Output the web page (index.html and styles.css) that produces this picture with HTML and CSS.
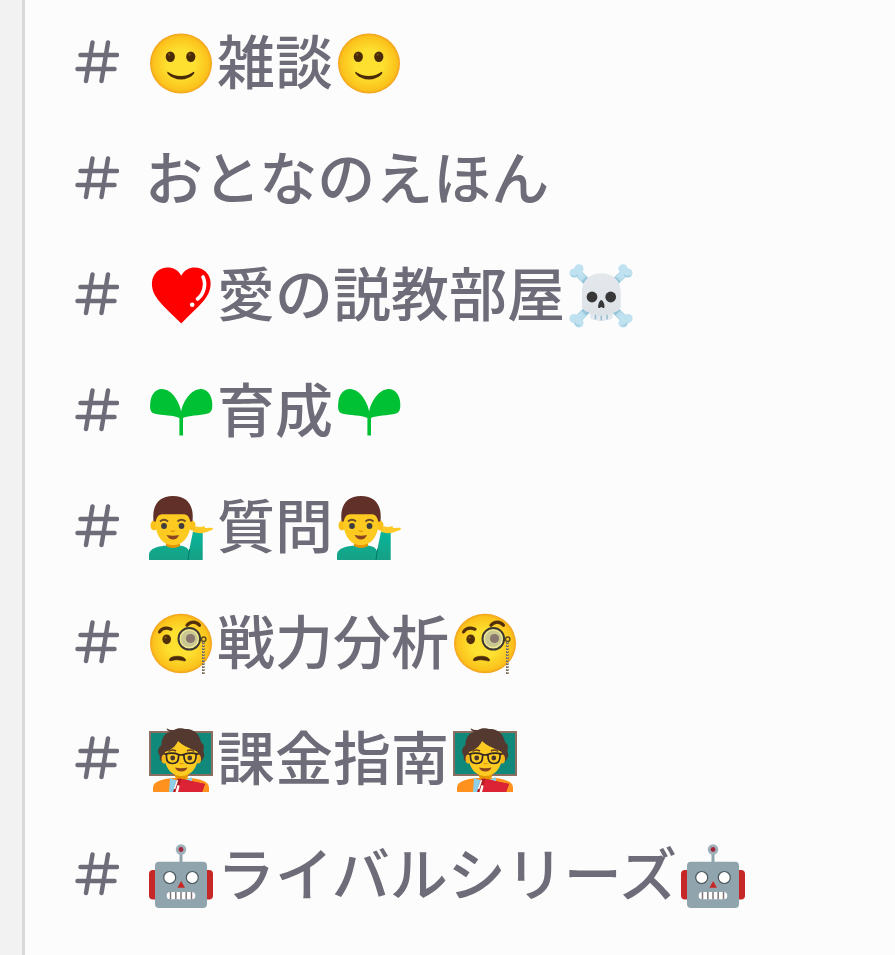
FILE: index.html
```html
<!DOCTYPE html>
<html lang="ja">
<head>
<meta charset="utf-8">
<meta name="viewport" content="width=device-width, initial-scale=1">
<title>チャンネル</title>
<link rel="stylesheet" href="styles.css">
</head>
<body>
<svg class="sprite" aria-hidden="true">
  <defs>
    <radialGradient id="skin"><stop offset=".45" stop-color="#fde030"/><stop offset=".9" stop-color="#fbc21c"/><stop offset="1" stop-color="#f2a11e"/></radialGradient>
    <linearGradient id="shirt" x1="0" y1="0" x2="0" y2="1"><stop offset="0" stop-color="#08b69a"/><stop offset="1" stop-color="#16a085"/></linearGradient>
    <linearGradient id="bone" x1="0" y1="0" x2="0" y2="1"><stop offset="0" stop-color="#e4e8ec"/><stop offset="1" stop-color="#dde2e7"/></linearGradient>
    <symbol id="hash" viewBox="0 0 44 44">
      <path d="M5.5 15H42M2.5 29H39.500M17.500 2.500L11 41M33 2.500L26.500 41" fill="none" stroke="#6d6c78" stroke-width="4.500" stroke-linecap="round"/>
    </symbol>
    <symbol id="smile" viewBox="0 0 64 64">
      <ellipse cx="32" cy="31.500" rx="31" ry="30" fill="url(#skin)"/>
      <ellipse cx="21.300" cy="24.800" rx="4.600" ry="5.200" fill="#4a2b08"/>
      <ellipse cx="41.800" cy="24.800" rx="4.600" ry="5.200" fill="#4a2b08"/>
      <circle cx="20.200" cy="22.600" r="1.100" fill="#7c5410"/><circle cx="40.700" cy="22.600" r="1.100" fill="#7c5410"/>
      <path d="M18.700 39.800C26 45.500 37.500 45.500 44.600 39.800C45.400 39.600 45.600 41 44.800 42C38.500 49.300 25.500 49.300 18.900 42C18.200 41 18 39.600 18.700 39.800Z" fill="#4a2b08"/>
    </symbol>
    <symbol id="heart" viewBox="0 0 64 64">
      <path d="M32.300 11.700C27 2 15 1.500 8 7.500C1.500 13.500 1.500 24 6.500 32C12 41 23 50 32.300 59.500C41 50 52.500 41 58 32C63 24 63.200 13.500 56.500 7.500C49.500 1.500 37.500 2 32.300 11.700Z" fill="#ff0000"/>
      <path d="M54 13C57.500 20 55 30 48.500 35" fill="none" stroke="#fff" stroke-width="3.600" stroke-linecap="round"/>
      <circle cx="43.200" cy="40.700" r="2.300" fill="#fff"/>
    </symbol>
    <symbol id="bonearm" viewBox="0 0 64 64">
      <path d="M5 5L59 59" stroke="#94c5d8" stroke-width="7.500"/>
      <path d="M9 9L15 15M49 49L55 55" stroke="#b8deed" stroke-width="7"/>
      <g fill="#c0e2f0"><circle cx="10" cy="4.800" r="4.600"/><circle cx="5" cy="9" r="4.600"/><circle cx="59" cy="54.500" r="4.600"/><circle cx="54" cy="59" r="4.600"/><path d="M5 5L12 6L15 12L11 15L6 11Z"/><path d="M59 59L52 58L49 52L53 49L58 53Z"/></g>
      <path d="M2.500 11.500Q6 14 9 11M53 61.500Q57 62.500 58.500 58.500" fill="none" stroke="#9fcde0" stroke-width="1.200"/>
    </symbol>
    <symbol id="skull" viewBox="0 0 64 64">
      <use href="#bonearm"/><g transform="matrix(-1 0 0 1 64 0)"><use href="#bonearm"/></g>
      <path d="M21 47V53C21 55 24 56.500 26.500 55.500Q29.500 58 32.300 56.500Q35 58 38 55.500C41 56.500 43.700 55 43.700 53V47Z" fill="#e3e9ee"/>
      <path d="M26.500 50V55.500M32.300 50V56.500M38 50V55.500" stroke="#94bccd" stroke-width="1.500"/>
      <path d="M32.300 9.300C20 9.300 13 17 13 28V42C13 46 17 47.500 20 48.500Q22 52 26 50.500Q29.500 53 32.300 51.500Q35 53 38.500 50.500Q43 52 45 48.500C48 47.500 51.700 46 51.700 42V28C51.700 17 44.500 9.300 32.300 9.300Z" fill="url(#bone)"/>
      <circle cx="23" cy="33" r="5.400" fill="#373738"/><circle cx="41.700" cy="33" r="5.400" fill="#373738"/>
      <path d="M32.300 36C29.500 37 28.700 43 29.500 44C31 44.500 31.500 43 32.300 43C33 43 34 44.500 35.300 44C36 42 35 37 32.300 36Z" fill="#373738"/>
    </symbol>
    <symbol id="sprout" viewBox="0 0 64 64">
      <path d="M30.400 38C24 34.500 14 36 5 33.500C0 32 1 25 1.500 21C2.500 14 7 8.700 13 9C23 9.500 30 21 32.200 31.500C34 21 42 9.500 51.500 9C57.500 8.700 62 14 63 21C63.500 26 64 32 59 33.500C50 36 40 35 34 38V55.500H30.400Z" fill="#00c033"/>
    </symbol>
    <symbol id="man" viewBox="0 0 64 64">
      <path d="M0 64V58C1 52 10 50 18 49.500H31C36 50 39 52 40 55L44 35.500L53.700 36.500V64Z" fill="url(#shirt)"/>
      <path d="M39 64L40.500 53" stroke="#00796b" stroke-width="1"/>
      <path d="M44 36C43 31 47 29.500 51 31L54 30.500Q56 29 56 32L63 31.700Q65 32.500 63 34L56 36.500Q50 38 44 36Z" fill="#ffca28"/>
      <path d="M17 43H31V50Q24 54 17 50Z" fill="#e59600"/>
      <ellipse cx="5" cy="29.500" rx="3.500" ry="5" fill="#fbc11a"/><ellipse cx="43" cy="29.500" rx="3.500" ry="5" fill="#fbc11a"/>
      <path d="M6 18C5 34 10 49 24 49S43 34 42 18Q37 7 24 7T6 18Z" fill="#fdca22"/>
      <path d="M4.500 25C3 10 9 0 24 0S45 10 43.500 25L41.500 26C40 20 38 18.500 35 18.300H13C10 18.500 8 20 6.500 26Z" fill="#613129"/>
      <path d="M11 25.500Q15 22 19 25.500M28.500 25.500Q32.500 22 36.500 25.500" fill="none" stroke="#6d4c2c" stroke-width="2"/>
      <circle cx="15" cy="30" r="2.900" fill="#403d3e"/><circle cx="32.500" cy="30" r="2.900" fill="#403d3e"/>
      <path d="M21 34.500H26.500Q24 38 21 34.500Z" fill="#e59600"/>
      <path d="M17.500 39Q24 40.500 30 39Q28 43.500 24 43.500T17.500 39Z" fill="#8a4520"/>
    </symbol>
    <symbol id="monocle" viewBox="0 0 64 64">
      <ellipse cx="32" cy="31.500" rx="31" ry="29.700" fill="url(#skin)"/>
      <ellipse cx="17.700" cy="27.300" rx="4.300" ry="4.900" fill="#513009"/><circle cx="16.500" cy="25.500" r="1.100" fill="#8a641b"/>
      <path d="M10.500 20C13 16 17.500 15.500 22 17.200M38 13.200C41.500 9 47 9 50.500 13.200" fill="none" stroke="#513009" stroke-width="3.200" stroke-linecap="round"/>
      <circle cx="40.300" cy="26.800" r="10.800" fill="#f0e894" stroke="#3b3730" stroke-width="2"/>
      <circle cx="40.300" cy="26.800" r="8.300" fill="#c9c891"/>
      <circle cx="41.500" cy="26.500" r="4.600" fill="#8a7770"/>
      <circle cx="54.700" cy="27.200" r="2.200" fill="none" stroke="#5d4b20" stroke-width="1.400"/>
      <path d="M54.300 30V62" fill="none" stroke="#75695a" stroke-width="2.600" stroke-dasharray="2 1"/><path d="M54.300 30V62" stroke="#d2c6a6" stroke-width="1" stroke-dasharray="1 2"/>
      <path d="M20.500 47C23 43.200 34 43.200 36.500 47.500C37 49.300 35.500 49.300 33.500 48.600C29 47.600 26 47.600 23 48.500C20.700 49.200 20 48.700 20.500 47Z" fill="#4b290b" stroke="#4b290b" stroke-width=".6"/>
    </symbol>
    <symbol id="teacher" viewBox="0 0 64 64">
      <rect x="1" y="4" width="62" height="43" fill="#11897a" stroke="#8d6e63" stroke-width="2"/>
      <path d="M4 64V59C5 53 14 51 23 50H42C51 51 59 53 60 59V64Z" fill="#ff921f"/>
      <path d="M21 50L32 54L43 49V64H20Z" fill="#8ed0e8"/>
      <path d="M26 41H39V49L32.500 55L26 49Z" fill="#e59600"/>
      <path d="M11 28C7 23 10 19 12.500 17C12 9 18 3 22 4C18 3 17 1 18 0.500Q21 2.500 25 2C28 -0.500 34 0 36 1C45 0 51 7 52 14C57 18 54 21 54.500 24C57 28 53 34 49 34.500L15 34.500C11 33 10 31 11 28Z" fill="#543930"/>
      <ellipse cx="15.500" cy="31" rx="3" ry="4.500" fill="#f5b51b"/><ellipse cx="49" cy="31" rx="3" ry="4.500" fill="#f5b51b"/>
      <path d="M16 24C22 22 27 18 29 13C34 18 43 21 48.500 24C50.500 38 43 48 32.300 48S14 38 16 24Z" fill="#fdca22"/>
      <path d="M19.500 23.500Q23 21 27 23M38 23Q42 21 45 23.500" fill="none" stroke="#613e20" stroke-width="1.500"/>
      <circle cx="23.700" cy="30" r="2.400" fill="#49382d"/><circle cx="40.800" cy="30" r="2.400" fill="#49382d"/>
      <path d="M15.500 26.200Q24 24 29.500 26.500Q32 27.500 34.500 26.500Q42 24 49 26.200M17.500 26.500C17 33 19 35.500 23.500 35.500S30 33 29.500 26.500M35 26.500C34.500 33 37 35.500 41 35.500S47.500 33 47 26.500" fill="none" stroke="#302722" stroke-width="1.700"/>
      <path d="M29.700 35H35Q32.500 37.500 29.700 35Z" fill="#e59600"/>
      <path d="M26 39.500Q32.300 41 38.500 39.500Q37 43.500 32.300 43.500T26 39.500Z" fill="#8a4520"/>
      <path d="M24 64L28 51L31 50.500L56 56L53 64Z" fill="#b71c1c"/><path d="M26.500 64L28.500 57L34 59L32 64Z" fill="#fff"/><path d="M30 60.500L32 51L56 56L53 64H29Z" fill="#db2335"/><path d="M25.500 61L28.500 52" stroke="#fff" stroke-width="1.500"/>
    </symbol>
    <symbol id="robot" viewBox="0 0 64 64">
      <path d="M32 8V19" stroke="#90a4ae" stroke-width="3"/><circle cx="32" cy="5.500" r="5.200" fill="#9eb0b9"/><circle cx="32" cy="5.500" r="2.400" fill="#a3263b"/>
      <rect x="0" y="26" width="12" height="29.500" rx="4" fill="#c62828"/><rect x="52" y="26" width="12" height="29.500" rx="4" fill="#c62828"/>
      <rect x="6" y="17.700" width="52" height="46.300" rx="4" fill="#90a4ae"/>
      <circle cx="20.700" cy="33.500" r="6" fill="#fff" stroke="#4b565b" stroke-width="1.200"/><circle cx="43.300" cy="33.500" r="6" fill="#fff" stroke="#4b565b" stroke-width="1.200"/>
      <path d="M32.200 37L36 43.800H28.400Z" fill="#c62828"/>
      <rect x="17.700" y="48" width="28.600" height="7.300" rx="3.600" fill="#fff"/><path d="M21.500 48V55.300M26.800 48V55.300M32 48V55.300M37.200 48V55.300M42.500 48V55.300" stroke="#7d7679" stroke-width="1.500"/>
    </symbol>
  </defs>
</svg>
<div class="app">
  <aside class="rail"></aside>
  <nav class="channels" aria-label="チャンネル">
    <ul class="list">
      <li><a class="channel" href="#c1"><svg class="hash"><use href="#hash"/></svg><span class="name"><svg class="emoji"><use href="#smile"/></svg>雑談<svg class="emoji"><use href="#smile"/></svg></span></a></li>
      <li><a class="channel" href="#c2"><svg class="hash"><use href="#hash"/></svg><span class="name">おとなのえほん</span></a></li>
      <li><a class="channel" href="#c3"><svg class="hash"><use href="#hash"/></svg><span class="name"><svg class="emoji"><use href="#heart"/></svg>愛の説教部屋<svg class="emoji"><use href="#skull"/></svg></span></a></li>
      <li><a class="channel" href="#c4"><svg class="hash"><use href="#hash"/></svg><span class="name"><svg class="emoji"><use href="#sprout"/></svg>育成<svg class="emoji"><use href="#sprout"/></svg></span></a></li>
      <li><a class="channel" href="#c5"><svg class="hash"><use href="#hash"/></svg><span class="name"><svg class="emoji"><use href="#man"/></svg>質問<svg class="emoji"><use href="#man"/></svg></span></a></li>
      <li><a class="channel" href="#c6"><svg class="hash"><use href="#hash"/></svg><span class="name"><svg class="emoji"><use href="#monocle"/></svg>戦力分析<svg class="emoji"><use href="#monocle"/></svg></span></a></li>
      <li><a class="channel" href="#c7"><svg class="hash"><use href="#hash"/></svg><span class="name"><svg class="emoji"><use href="#teacher"/></svg>課金指南<svg class="emoji"><use href="#teacher"/></svg></span></a></li>
      <li><a class="channel" href="#c8"><svg class="hash"><use href="#hash"/></svg><span class="name"><svg class="emoji"><use href="#robot"/></svg>ライバルシリーズ<svg class="emoji"><use href="#robot"/></svg></span></a></li>
    </ul>
  </nav>
</div>
</body>
</html>
```
FILE: styles.css
```css
* {
  box-sizing: border-box;
}

body {
  margin: 0;
  background: #fcfcfc;
  color: #6d6c78;
  font-family: "Noto Sans CJK JP", sans-serif;
  font-size: 58px;
  font-weight: 500;
}

.sprite {
  position: absolute;
  width: 0;
  height: 0;
}

.app {
  display: flex;
  min-height: 100vh;
}

.rail {
  flex: 0 0 25px;
  background: #f2f2f2;
  border-right: 3px solid #d8d8d8;
}

.channels {
  flex: 1;
  min-width: 0;
  padding: 4px 0 0 50px;
}

.list {
  margin: 0;
  padding: 0;
  list-style: none;
}

.channel {
  display: flex;
  align-items: center;
  gap: 26px;
  height: 116px;
  color: inherit;
  text-decoration: none;
}

.hash {
  flex: none;
  width: 44px;
  height: 44px;
}

.name {
  display: flex;
  align-items: center;
  padding-bottom: 6px;
  line-height: 84px;
  white-space: nowrap;
}

.emoji {
  flex: none;
  width: 64px;
  height: 64px;
  margin: 10px 4px 0;
}
```
